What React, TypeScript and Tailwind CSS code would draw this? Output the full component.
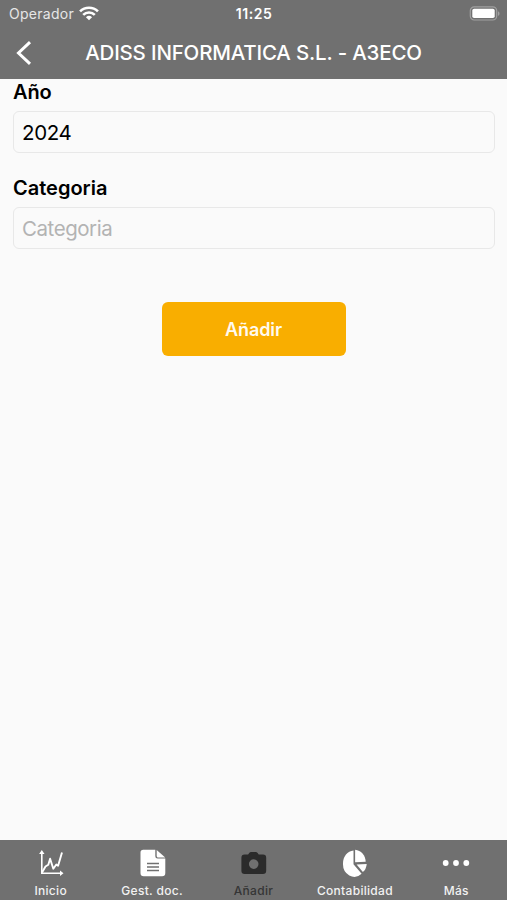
import type { ReactNode } from 'react';

function WifiIcon() {
  return (
    <svg className="h-[15px] w-5" viewBox="0 0 19 15" preserveAspectRatio="none" fill="none" stroke="#fff" strokeWidth="2.5">
      <path d="M1 5.300a12 12 0 0 1 17 0" />
      <path d="M4 8.800a7.800 7.800 0 0 1 11 0" />
      <path d="M9.500 14.300l-2.900-3a4.100 4.100 0 0 1 5.800 0z" fill="#fff" stroke="none" />
    </svg>
  );
}

function BatteryIcon() {
  return (
    <svg className="h-[15px] w-[31px]" viewBox="0 0 31 15">
      <rect x="1.300" y="0.800" width="26.400" height="13.200" rx="4" fill="none" stroke="#a0a0a0" strokeWidth="1.200" />
      <rect x="3.300" y="2.800" width="22.400" height="9.200" rx="1.800" fill="#fff" />
      <path d="M29 5.200c2 .8 2 3.800 0 4.600z" fill="#a0a0a0" />
    </svg>
  );
}

function ChartIcon() {
  return (
    <svg className="h-7 w-7" viewBox="0 0 28 28" fill="none" stroke="#fff" strokeWidth="1.600">
      <path d="M4.800 3v21.200h20" />
      <path d="M5 23.500l3.500-6 2.800-1.800 1.800-6 3.200 10 3-4.200 1.800 1.300L25 3.500" strokeWidth="1.900" strokeLinejoin="round" />
      <path d="M4.800 1l2.700 4H2.100zM26.500 24.200l-3.500 2.800v-5.600z" fill="#fff" stroke="none" />
    </svg>
  );
}

function DocumentIcon() {
  return (
    <svg className="h-7 w-7 translate-x-px" viewBox="0 0 28 28" fill="#fff">
      <path d="M4.200 0.800H16.300v6.400a2.300 2.300 0 0 0 2.300 2.300H26.300V24a3.200 3.200 0 0 1-3.200 3.200H4.700a3.200 3.200 0 0 1-3.200-3.200V3.500A2.700 2.700 0 0 1 4.200 0.800z" />
      <path d="M17.700 1l8.500 7.400h-7a1.500 1.500 0 0 1-1.500-1.500z" />
      <path d="M8 14.600h12M8 18.100h12M8 21.600h12" stroke="#707070" strokeWidth="1.500" />
    </svg>
  );
}

function CameraIcon() {
  return (
    <svg className="h-7 w-7" viewBox="0 0 28 28">
      <path
        fillRule="evenodd"
        fill="#2b2b2b"
        d="M4.600 5.600h3.500l1.100-1.700q.7-1 1.900-1h4.600q1.200 0 1.900 1l1.100 1.700h4.300a3.200 3.200 0 0 1 3.200 3.200v13a3.200 3.200 0 0 1-3.200 3.200H4.600a3.200 3.200 0 0 1-3.200-3.200v-13a3.200 3.200 0 0 1 3.200-3.200zM13.700 10.300a4.800 4.800 0 1 0 0 9.600 4.800 4.800 0 0 0 0-9.600z"
      />
    </svg>
  );
}

function PieIcon() {
  return (
    <svg className="h-7 w-7" viewBox="0 0 28 28" fill="#fff">
      <path d="M12.500 1.500V15.200L20.600 24.700A11.300 12.600 0 0 1 2 14.500C2 7.500 6.500 1.900 12.500 1.500z" />
      <path d="M14.100 0.800C20 1.300 24.500 6.300 24.700 12.800L14.100 13.300z" />
      <path d="M15.600 15.400L25.700 14.900Q25.300 20 21.900 23z" />
    </svg>
  );
}

function MoreIcon() {
  return (
    <svg className="h-7 w-7" viewBox="0 0 28 28" fill="#fff">
      <circle cx="3.700" cy="14" r="2.900" />
      <circle cx="14" cy="14" r="2.900" />
      <circle cx="24.300" cy="14" r="2.900" />
    </svg>
  );
}

function Tab({ label, active = false, children }: { label: string; active?: boolean; children: ReactNode }) {
  return (
    <button className="flex flex-1 flex-col items-center pt-[9px]">
      {children}
      <span
        className={`mt-[6px] text-[12px] leading-4 font-medium whitespace-nowrap tracking-[0.3px] ${active ? 'text-[#353535]' : 'text-[#f2f2f2]'}`}
      >
        {label}
      </span>
    </button>
  );
}

export default function App() {
  return (
    <div className="flex h-[900px] w-[507px] flex-col overflow-hidden bg-[#fafafa] font-['Inter',sans-serif] text-black">
      <header className="h-[79px] shrink-0 bg-[#707070] text-white">
        <div className="grid h-[27px] grid-cols-3 items-center pr-[7px] pl-[9px]">
          <div className="flex items-center gap-[5px]">
            <span className="text-[14px] tracking-[0.28px] text-[#e6e6e6]">Operador</span>
            <WifiIcon />
          </div>
          <span className="pr-px text-center text-[14px] font-semibold tracking-[0.55px]">11:25</span>
          <div className="flex justify-end">
            <BatteryIcon />
          </div>
        </div>
        <div className="flex h-[51px] items-center">
          <button className="ml-[15px] w-[18px]" aria-label="Atrás">
            <svg className="h-6 w-[18px]" viewBox="0 0 18 24" fill="none" stroke="#fff" strokeWidth="3">
              <path d="M15 1.200L3.500 12 15 22.800" />
            </svg>
          </button>
          <h1 className="mr-[33px] flex-1 pt-px text-center text-[20.5px] font-medium whitespace-nowrap tracking-[-0.18px]">
            ADISS INFORMATICA S.L. - A3ECO
          </h1>
        </div>
      </header>

      <main className="flex flex-1 flex-col px-[13px]">
        <label htmlFor="year" className="text-[20px] leading-[26px] font-semibold tracking-[-0.1px]">Año</label>
        <input
          id="year"
          defaultValue="2024"
          className="mt-[6px] h-[42px] w-[482px] rounded-[6px] border border-[#e8e8e8] px-2 pt-px text-[20.5px] tracking-[-0.35px] outline-none"
        />
        <label htmlFor="category" className="mt-[22px] text-[20px] leading-[26px] font-semibold">Categoria</label>
        <input
          id="category"
          placeholder="Categoria"
          className="mt-[6px] h-[42px] w-[482px] rounded-[6px] border border-[#e8e8e8] px-2 pt-px text-[20.5px] tracking-[-0.45px] outline-none placeholder:text-[#b3b3b3]"
        />
        <button className="mt-[53px] h-[54px] w-[184px] self-center rounded-[6px] bg-[#f9ae00] text-[18px] font-semibold tracking-[-0.1px] text-[#fffaf0]">
          Añadir
        </button>
      </main>

      <nav className="flex h-[60px] shrink-0 bg-[#707070]">
        <Tab label="Inicio"><ChartIcon /></Tab>
        <Tab label="Gest. doc."><DocumentIcon /></Tab>
        <Tab label="Añadir" active><CameraIcon /></Tab>
        <Tab label="Contabilidad"><PieIcon /></Tab>
        <Tab label="Más"><MoreIcon /></Tab>
      </nav>
    </div>
  );
}
